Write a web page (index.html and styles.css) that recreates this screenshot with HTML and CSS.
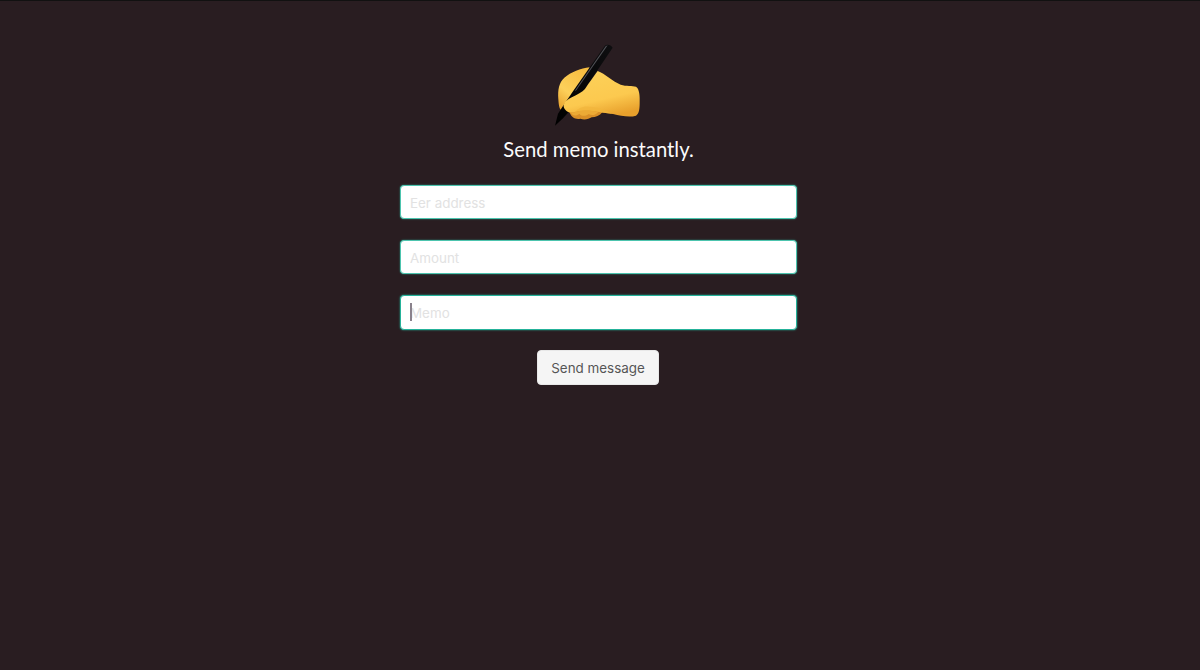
FILE: index.html
```html
<!DOCTYPE html>
<html lang="en">
<head>
<meta charset="utf-8">
<title>Send memo</title>
<link rel="stylesheet" href="styles.css">
</head>
<body>
<main class="page">
  <svg class="emoji" viewBox="0 0 360 300" aria-hidden="true">
    <defs>
      <linearGradient id="skin" x1="0.25" y1="0.1" x2="0.6" y2="1">
        <stop offset="0" stop-color="#fcd058"/>
        <stop offset="0.6" stop-color="#fcc94f"/>
        <stop offset="1" stop-color="#e8a02c"/>
      </linearGradient>
      <linearGradient id="finger" x1="0.7" y1="0" x2="0.1" y2="1">
        <stop offset="0" stop-color="#f7bd41"/>
        <stop offset="0.6" stop-color="#fdd05a"/>
        <stop offset="1" stop-color="#e8a12c"/>
      </linearGradient>
      <linearGradient id="pen" x1="1" y1="0" x2="0" y2="1">
        <stop offset="0" stop-color="#0e0e10"/>
        <stop offset="1" stop-color="#000"/>
      </linearGradient>
    </defs>
    <path fill="#d98f27" d="M90 228C96 248 110 254 124 251C136 256 150 252 158 247C170 247 182 242 190 232L150 205Z"/>
    <path fill="url(#finger)" d="M152 97C125 100 96 112 76 128C60 142 56 165 58 192C59 206 60 220 66 225C74 228 80 220 84 208L140 140Z"/>
    <path fill="url(#pen)" d="M197 33C203 26 216 29 221 38L128 176L92 228L72 250L48 272L57 236L66 222L100 172Z"/>
    <path fill="#6a6a70" opacity="0.75" d="M200 34L206 31L112 166L107 168Z"/>
    <path fill="url(#skin)" d="M176 108C198 116 222 140 245 149C262 154 280 152 291 155C301 161 303 182 302 205C302 222 300 237 291 242C270 248 245 242 222 237C208 234 192 234 178 230C160 227 135 223 108 231C92 236 77 228 74 215C73 203 84 194 100 186C114 179 130 172 138 162C151 142 165 124 176 108Z"/>
    <path fill="#ecaa35" d="M96 235C104 245 114 242 121 236C128 245 142 244 149 237C158 243 170 241 178 230C160 227 135 223 108 231Z"/>
    <path fill="#f1b53c" opacity="0.75" d="M108 231C135 223 160 227 178 230C192 234 208 234 222 237C200 225 180 217 150 215C130 213 118 221 108 231Z"/>
  </svg>
  <h1 class="title">Send memo instantly.</h1>
  <form class="memo-form">
    <input class="field" type="text" placeholder="Eer address">
    <input class="field" type="text" placeholder="Amount">
    <div class="field-wrap">
      <input class="field field-focus" type="text" placeholder="Memo">
      <span class="caret"></span>
    </div>
    <button class="send" type="button">Send message</button>
  </form>
</main>
</body>
</html>
```
FILE: styles.css
```css
html, body {
  margin: 0;
  height: 100%;
}
body {
  background: #291d21;
  border-top: 1px solid #111;
  box-sizing: border-box;
  overflow: hidden;
}
.page {
  display: flex;
  flex-direction: column;
  align-items: center;
  padding: 34px 3px 0 0;
}
.emoji {
  display: block;
  width: 120px;
  height: 100px;
}
.title {
  margin: 0 0 21px;
  height: 29px;
  font: 400 20.3px/29px "Lato", "Noto Sans", sans-serif;
  color: #fbfbfb;
}
.memo-form {
  display: flex;
  flex-direction: column;
  align-items: center;
  gap: 21px;
  width: 397px;
}
.field-wrap {
  position: relative;
  width: 100%;
}
.field {
  display: block;
  box-sizing: border-box;
  width: 100%;
  height: 34px;
  padding: 1px 9px 0;
  background: #fff;
  border: 1.5px solid #4cc4ae;
  border-radius: 4px;
  box-shadow: 0 0 1.5px #2eb8a0;
  outline: none;
  font: 400 13.4px "Inter", "Liberation Sans", sans-serif;
  color: #333;
}
.field::placeholder {
  color: #e2e2e2;
  opacity: 1;
}
.field-focus {
  height: 35px;
  padding-top: 0;
  border-width: 1.5px;
  border-color: #25b29a;
  box-shadow: 0 0 2px #25b29a;
}
.caret {
  position: absolute;
  left: 10px;
  top: 8px;
  width: 1.5px;
  height: 18px;
  background: #8a828c;
}
.send {
  height: 35px;
  width: 122px;
  margin: -1px 1px 0 0;
  padding: 0;
  background: #f5f5f5;
  border: 1px solid #e8e8e8;
  border-radius: 4px;
  font: 400 13.4px "Inter", "Liberation Sans", sans-serif;
  color: #555;
}
```
